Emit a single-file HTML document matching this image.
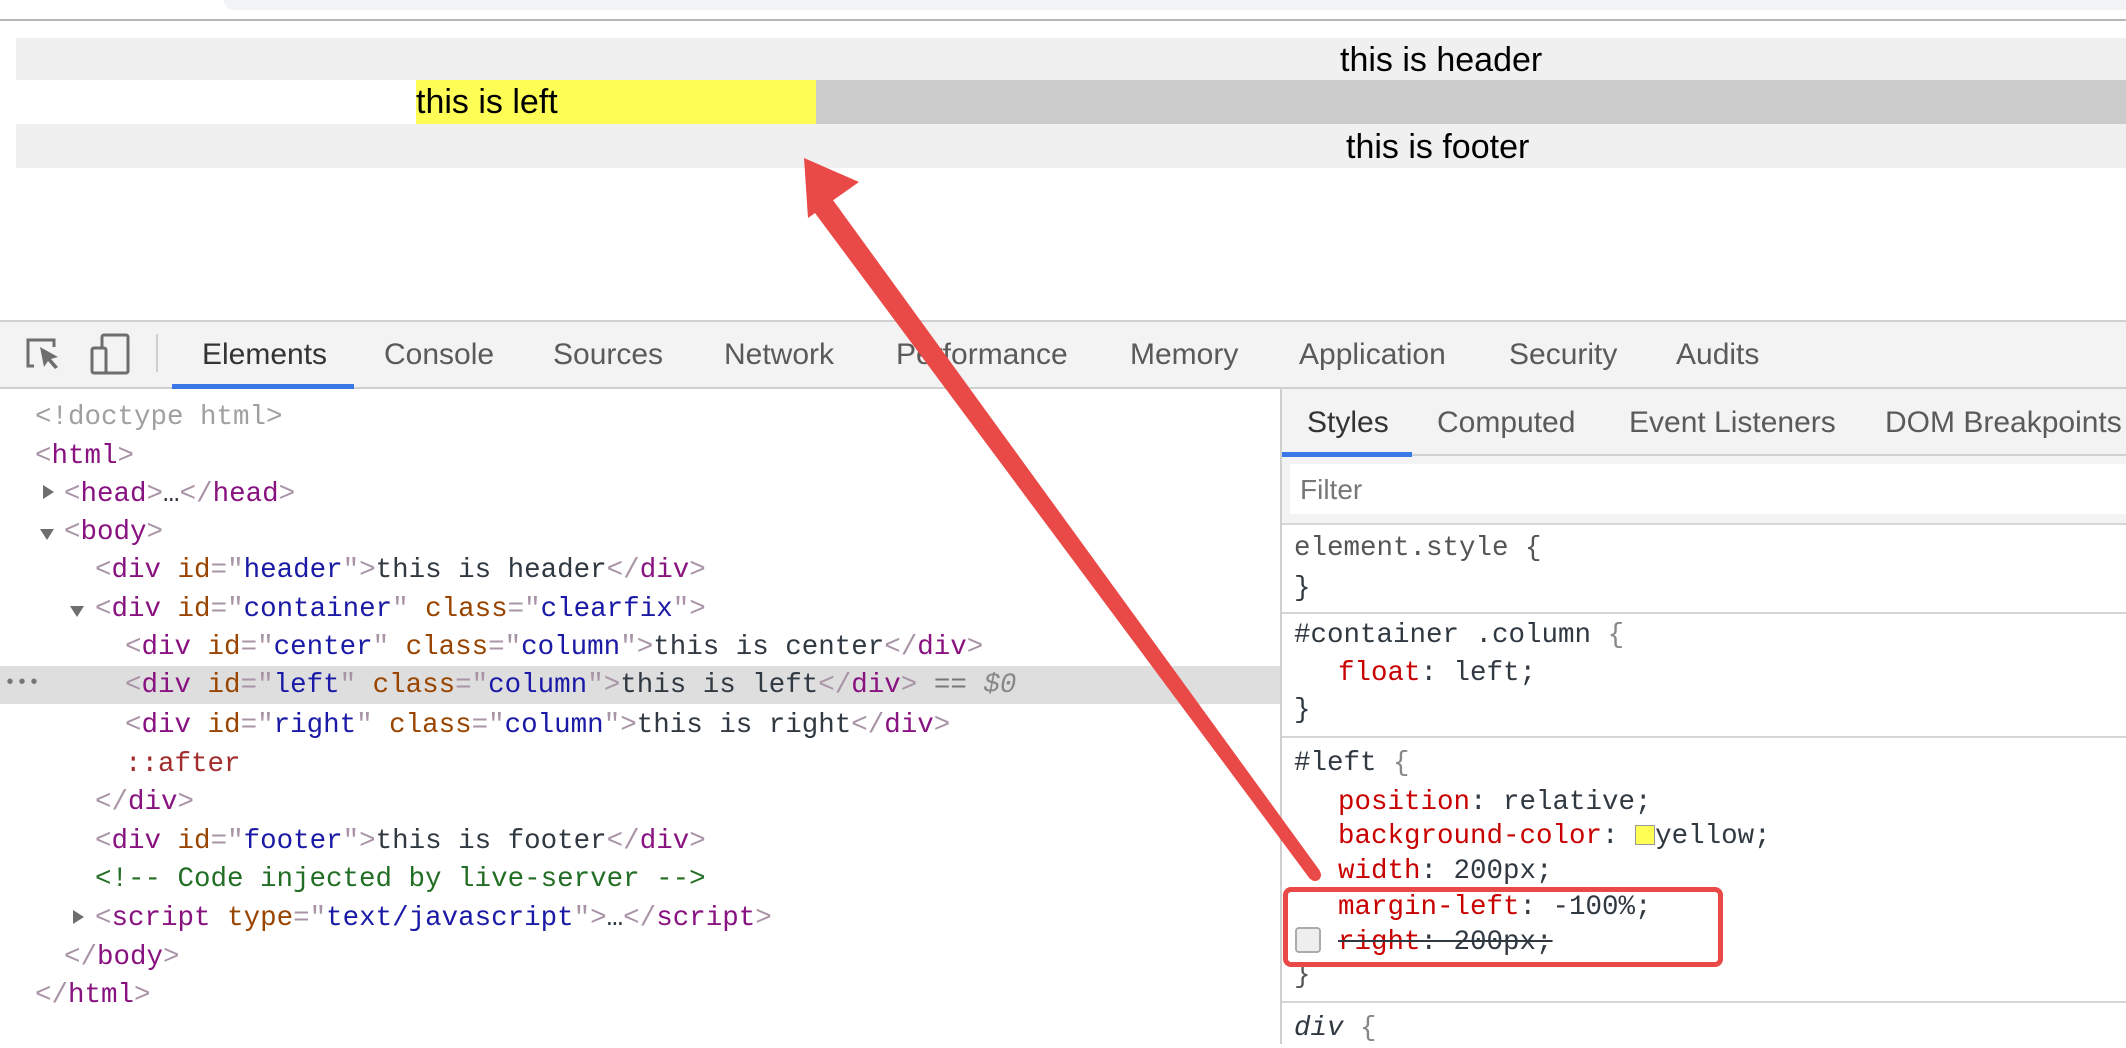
<!DOCTYPE html>
<html><head><meta charset="utf-8"><style>
*{margin:0;padding:0;box-sizing:border-box}
body{width:2126px;height:1044px;position:relative;overflow:hidden;background:#fff;font-family:"Liberation Sans",sans-serif}
.a{position:absolute;white-space:pre}
.m{font-family:"Liberation Mono",monospace;font-size:27.5px;line-height:38px;height:38px;color:#303942}
.p{color:#a894a6}.t{color:#881280}.n{color:#994500}.v{color:#1a1aa6}.g{color:#236e25}.r{color:#c80000}
.tab{font-size:30px;color:#5a5a5a;line-height:40px}
.tri{position:absolute;width:0;height:0}
.c{transform:translateY(3px)}
</style></head><body>
<div class="a" style="left:224px;top:0;width:1902px;height:10px;background:#f1f3f4;border-radius:0 0 0 12px"></div>
<div class="a" style="left:0;top:19px;width:2126px;height:2px;background:#b8b8b8"></div>
<div class="a" style="left:16px;top:38px;width:2110px;height:42px;background:#f0f0f0"></div>
<div class="a" style="left:1340px;top:38px;line-height:44px;font-size:34px">this is header</div>
<div class="a" style="left:416px;top:80px;width:400px;height:44px;background:#fdfd55"></div>
<div class="a" style="left:816px;top:80px;width:1310px;height:44px;background:#cbcbcb"></div>
<div class="a" style="left:416px;top:80px;line-height:44px;font-size:34px">this is left</div>
<div class="a" style="left:16px;top:124px;width:2110px;height:44px;background:#f0f0f0"></div>
<div class="a" style="left:1346px;top:124px;line-height:46px;font-size:34px">this is footer</div>

<!-- toolbar -->
<div class="a" style="left:0;top:320px;width:2126px;height:69px;background:#f3f3f3;border-top:2px solid #d0d0d0;border-bottom:2px solid #d0d0d0"></div>
<svg class="a" style="left:20px;top:330px" width="120" height="50" viewBox="0 0 120 50">
<path d="M14 36 H8 V10 H34 V17" fill="none" stroke="#6e6e6e" stroke-width="3"/>
<path d="M20 17 L38 27 L31 29 L38 37 L35 39 L28 31 L24 37 Z" fill="#6e6e6e"/>
<rect x="82" y="5" width="26" height="38" rx="2" fill="none" stroke="#6e6e6e" stroke-width="3"/>
<rect x="72" y="18" width="14" height="25" rx="2" fill="#f3f3f3" stroke="#6e6e6e" stroke-width="3"/>
</svg>
<div class="a" style="left:156px;top:334px;width:2px;height:38px;background:#cfcfcf"></div>
<div class="a tab" style="left:202px;top:335px;color:#333">Elements</div>
<div class="a" style="left:172px;top:384px;width:182px;height:5px;background:#3b78e7"></div>
<div class="a tab" style="left:384px;top:335px">Console</div>
<div class="a tab" style="left:553px;top:335px">Sources</div>
<div class="a tab" style="left:724px;top:335px">Network</div>
<div class="a tab" style="left:896px;top:335px">Performance</div>
<div class="a tab" style="left:1130px;top:335px">Memory</div>
<div class="a tab" style="left:1299px;top:335px">Application</div>
<div class="a tab" style="left:1509px;top:335px">Security</div>
<div class="a tab" style="left:1676px;top:335px">Audits</div>

<!-- DOM panel -->
<div class="a" style="left:0;top:666px;width:1281px;height:38px;background:#dedede"></div>
<div class="a" style="left:1280px;top:389px;width:2px;height:655px;background:#cfcfcf"></div>
<div class="c">
<div class="a m" style="left:35px;top:396px;color:#a0a0a0">&lt;!doctype html&gt;</div>
<div class="a m" style="left:35px;top:435px"><span class="p">&lt;</span><span class="t">html</span><span class="p">&gt;</span></div>
<div class="tri" style="left:43px;top:482px;border-left:11px solid #6e6e6e;border-top:7px solid transparent;border-bottom:7px solid transparent"></div>
<div class="a m" style="left:64px;top:473px"><span class="p">&lt;</span><span class="t">head</span><span class="p">&gt;</span>…<span class="p">&lt;/</span><span class="t">head</span><span class="p">&gt;</span></div>
<div class="tri" style="left:40px;top:526px;border-top:11px solid #6e6e6e;border-left:7px solid transparent;border-right:7px solid transparent"></div>
<div class="a m" style="left:64px;top:511px"><span class="p">&lt;</span><span class="t">body</span><span class="p">&gt;</span></div>
<div class="a m" style="left:95px;top:549px"><span class="p">&lt;</span><span class="t">div</span> <span class="n">id</span><span class="p">="</span><span class="v">header</span><span class="p">"&gt;</span>this is header<span class="p">&lt;/</span><span class="t">div</span><span class="p">&gt;</span></div>
<div class="tri" style="left:70px;top:603px;border-top:11px solid #6e6e6e;border-left:7px solid transparent;border-right:7px solid transparent"></div>
<div class="a m" style="left:95px;top:588px"><span class="p">&lt;</span><span class="t">div</span> <span class="n">id</span><span class="p">="</span><span class="v">container</span><span class="p">"</span> <span class="n">class</span><span class="p">="</span><span class="v">clearfix</span><span class="p">"&gt;</span></div>
<div class="a m" style="left:125px;top:626px"><span class="p">&lt;</span><span class="t">div</span> <span class="n">id</span><span class="p">="</span><span class="v">center</span><span class="p">"</span> <span class="n">class</span><span class="p">="</span><span class="v">column</span><span class="p">"&gt;</span>this is center<span class="p">&lt;/</span><span class="t">div</span><span class="p">&gt;</span></div>
<div class="a m" style="left:4px;top:662px;color:#777;font-size:20px">•••</div>
<div class="a m" style="left:125px;top:664px"><span class="p">&lt;</span><span class="t">div</span> <span class="n">id</span><span class="p">="</span><span class="v">left</span><span class="p">"</span> <span class="n">class</span><span class="p">="</span><span class="v">column</span><span class="p">"&gt;</span>this is left<span class="p">&lt;/</span><span class="t">div</span><span class="p">&gt;</span> <span style="color:#777">==</span> <i style="color:#888">$0</i></div>
<div class="a m" style="left:125px;top:704px"><span class="p">&lt;</span><span class="t">div</span> <span class="n">id</span><span class="p">="</span><span class="v">right</span><span class="p">"</span> <span class="n">class</span><span class="p">="</span><span class="v">column</span><span class="p">"&gt;</span>this is right<span class="p">&lt;/</span><span class="t">div</span><span class="p">&gt;</span></div>
<div class="a m" style="left:125px;top:743px;color:#a12d2d">::after</div>
<div class="a m" style="left:95px;top:781px"><span class="p">&lt;/</span><span class="t">div</span><span class="p">&gt;</span></div>
<div class="a m" style="left:95px;top:820px"><span class="p">&lt;</span><span class="t">div</span> <span class="n">id</span><span class="p">="</span><span class="v">footer</span><span class="p">"&gt;</span>this is footer<span class="p">&lt;/</span><span class="t">div</span><span class="p">&gt;</span></div>
<div class="a m g" style="left:95px;top:858px">&lt;!-- Code injected by live-server --&gt;</div>
<div class="tri" style="left:73px;top:907px;border-left:11px solid #6e6e6e;border-top:7px solid transparent;border-bottom:7px solid transparent"></div>
<div class="a m" style="left:95px;top:897px"><span class="p">&lt;</span><span class="t">script</span> <span class="n">type</span><span class="p">="</span><span class="v">text/javascript</span><span class="p">"&gt;</span>…<span class="p">&lt;/</span><span class="t">script</span><span class="p">&gt;</span></div>
<div class="a m" style="left:64px;top:936px"><span class="p">&lt;/</span><span class="t">body</span><span class="p">&gt;</span></div>
<div class="a m" style="left:35px;top:974px"><span class="p">&lt;/</span><span class="t">html</span><span class="p">&gt;</span></div>
</div>

<!-- styles panel -->
<div class="a" style="left:1282px;top:389px;width:844px;height:135px;background:#f3f3f3"></div>
<div class="a" style="left:1282px;top:454px;width:844px;height:2px;background:#d0d0d0"></div>
<div class="a" style="left:1282px;top:452px;width:130px;height:5px;background:#3b78e7"></div>
<div class="a tab" style="left:1307px;top:403px;color:#333">Styles</div>
<div class="a tab" style="left:1437px;top:403px">Computed</div>
<div class="a tab" style="left:1629px;top:403px">Event Listeners</div>
<div class="a tab" style="left:1885px;top:403px">DOM Breakpoints</div>
<div class="a" style="left:1290px;top:464px;width:836px;height:50px;background:#fff"></div>
<div class="a" style="left:1300px;top:470px;font-size:28px;line-height:40px;color:#777">Filter</div>
<div class="a" style="left:1282px;top:523px;width:844px;height:2px;background:#d6d6d6"></div>
<div class="c">
<div class="a m" style="left:1294px;top:527px;color:#555">element.style {</div>
<div class="a m" style="left:1294px;top:567px">}</div>
<div class="a m" style="left:1294px;top:614px">#container .column <span style="color:#888">{</span></div>
<div class="a m" style="left:1338px;top:652px"><span class="r">float</span>: left;</div>
<div class="a m" style="left:1294px;top:689px">}</div>
<div class="a m" style="left:1294px;top:742px">#left <span style="color:#888">{</span></div>
<div class="a m" style="left:1338px;top:781px"><span class="r">position</span>: relative;</div>
<div class="a m" style="left:1338px;top:815px"><span class="r">background-color</span>: <span style="display:inline-block;width:20px;height:20px;background:#ffff55;border:1px solid #999;vertical-align:-2px"></span>yellow;</div>
<div class="a m" style="left:1338px;top:850px"><span class="r">width</span>: 200px;</div>
<div class="a m" style="left:1338px;top:886px"><span class="r">margin-left</span>: -100%;</div>
<div class="a m" style="left:1338px;top:921px;text-decoration:line-through"><span class="r">right</span>: 200px;</div>
<div class="a m" style="left:1294px;top:954px;color:#555">}</div>
<div class="a m" style="left:1294px;top:1007px"><i>div</i> <span style="color:#888">{</span></div>
</div>
<div class="a" style="left:1282px;top:612px;width:844px;height:2px;background:#d6d6d6"></div>
<div class="a" style="left:1282px;top:736px;width:844px;height:2px;background:#d6d6d6"></div>
<div class="a" style="left:1282px;top:1001px;width:844px;height:2px;background:#d6d6d6"></div>
<div class="a" style="left:1295px;top:927px;width:26px;height:26px;border:2px solid #aaa;border-radius:4px;background:#eee"></div>
<div class="a" style="left:1283px;top:887px;width:440px;height:80px;border:5px solid #e94a47;border-radius:8px"></div>

<svg class="a" style="left:0;top:0" width="2126" height="1044">
<polygon points="830,196 1320,871 1310,879 812,209" fill="#e94a47"/>
<polygon points="804,158 859,182 808,218" fill="#e94a47"/>
<circle cx="1315" cy="875" r="6" fill="#e94a47"/>
</svg>
</body></html>
